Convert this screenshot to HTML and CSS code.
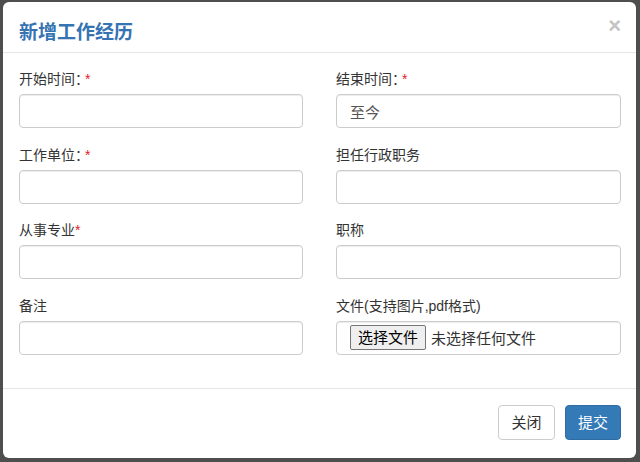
FILE: index.html
```html
<!DOCTYPE html>
<html lang="zh-CN">
<head>
<meta charset="utf-8">
<title>新增工作经历</title>
<link rel="stylesheet" href="styles.css">
</head>
<body>
<div class="backdrop">
  <div class="modal">
    <div class="modal-header">
      <h4 class="modal-title">新增工作经历</h4>
      <button class="close" type="button">×</button>
    </div>
    <div class="modal-body">
      <div class="form-grid">
        <div class="form-group">
          <label class="label">开始时间<span class="colon">：</span><span class="req">*</span></label>
          <input class="form-control" type="text">
        </div>
        <div class="form-group">
          <label class="label">结束时间<span class="colon">：</span><span class="req">*</span></label>
          <input class="form-control" type="text" value="至今">
        </div>
        <div class="form-group">
          <label class="label">工作单位<span class="colon">：</span><span class="req">*</span></label>
          <input class="form-control" type="text">
        </div>
        <div class="form-group">
          <label class="label">担任行政职务</label>
          <input class="form-control" type="text">
        </div>
        <div class="form-group">
          <label class="label">从事专业<span class="req tight">*</span></label>
          <input class="form-control" type="text">
        </div>
        <div class="form-group">
          <label class="label">职称</label>
          <input class="form-control" type="text">
        </div>
        <div class="form-group">
          <label class="label">备注</label>
          <input class="form-control" type="text">
        </div>
        <div class="form-group">
          <label class="label">文件(支持图片,pdf格式)</label>
          <div class="form-control file-control">
            <span class="file-btn">选择文件</span>
            <span class="file-name">未选择任何文件</span>
          </div>
        </div>
      </div>
    </div>
    <div class="modal-footer">
      <button class="btn btn-default" type="button">关闭</button>
      <button class="btn btn-primary" type="button">提交</button>
    </div>
  </div>
</div>
</body>
</html>
```

FILE: styles.css
```css
* {
  box-sizing: border-box;
}

html, body {
  margin: 0;
  padding: 0;
}

body {
  width: 640px;
  height: 462px;
  overflow: hidden;
  background: #4e4e4e;
  font-family: "Liberation Sans", "Noto Sans CJK SC", sans-serif;
  font-size: 14px;
  color: #333;
}

.backdrop {
  padding: 2px 4px 0 3px;
}

.modal {
  width: 633px;
  height: 456px;
  background: #fff;
  border-radius: 6px;
  overflow: hidden;
}

.modal-header {
  display: flex;
  justify-content: space-between;
  align-items: flex-start;
  padding: 17px 15px 9px 16px;
  border-bottom: 1px solid #e5e5e5;
}

.modal-title {
  margin: 0;
  font-size: 19px;
  line-height: 24px;
  font-weight: 700;
  color: #3673b3;
  font-family: "Noto Sans CJK SC", sans-serif;
}

.close {
  margin: 0;
  padding: 0;
  border: 0;
  background: none;
  font-family: "Liberation Sans", sans-serif;
  font-size: 22px;
  font-weight: 700;
  line-height: 16px;
  color: #c4c4c4;
  margin-top: -1px;
}

.modal-body {
  padding: 16px 15px 33px 16px;
}

.form-grid {
  display: grid;
  grid-template-columns: 284px 285px;
  column-gap: 33px;
  row-gap: 16.5px;
}

.form-group {
  display: flex;
  flex-direction: column;
}

.label {
  display: block;
  line-height: 20px;
  margin-bottom: 5px;
  font-size: 14px;
  color: #333;
}

.colon {
  letter-spacing: -5px;
}

.req {
  color: #e0202a;
  margin-left: 1px;
}

.req.tight {
  margin-left: 0;
}

.form-control {
  display: block;
  width: 100%;
  height: 34px;
  margin: 0;
  padding: 6px 13px;
  font-family: "Liberation Sans", "Noto Sans CJK SC", sans-serif;
  font-size: 15px;
  color: #555;
  background: #fff;
  border: 1px solid #ccc;
  border-radius: 4px;
  box-shadow: inset 0 1px 1px rgba(0, 0, 0, 0.075);
}

.file-control {
  display: flex;
  align-items: center;
  padding: 0 13px;
  gap: 5px;
}

.file-btn {
  display: inline-block;
  height: 25px;
  line-height: 23px;
  padding: 0 7px;
  background: #efefef;
  border: 1px solid #767676;
  border-radius: 2px;
  color: #000;
  font-size: 15px;
}

.file-name {
  color: #333;
  font-size: 15px;
}

.modal-footer {
  display: flex;
  justify-content: flex-end;
  gap: 10px;
  padding: 16px 15px 17px;
  border-top: 1px solid #e5e5e5;
}

.btn {
  height: 35px;
  padding: 6px 0;
  font-family: "Liberation Sans", "Noto Sans CJK SC", sans-serif;
  font-size: 15px;
  line-height: 21px;
  text-align: center;
  white-space: nowrap;
  border-radius: 4px;
  border: 1px solid transparent;
}

.btn-default {
  width: 57px;
  background: #fff;
  border-color: #ccc;
  color: #333;
}

.btn-primary {
  width: 56px;
  background: #337ab7;
  border-color: #2e6da4;
  color: #fff;
}
```
